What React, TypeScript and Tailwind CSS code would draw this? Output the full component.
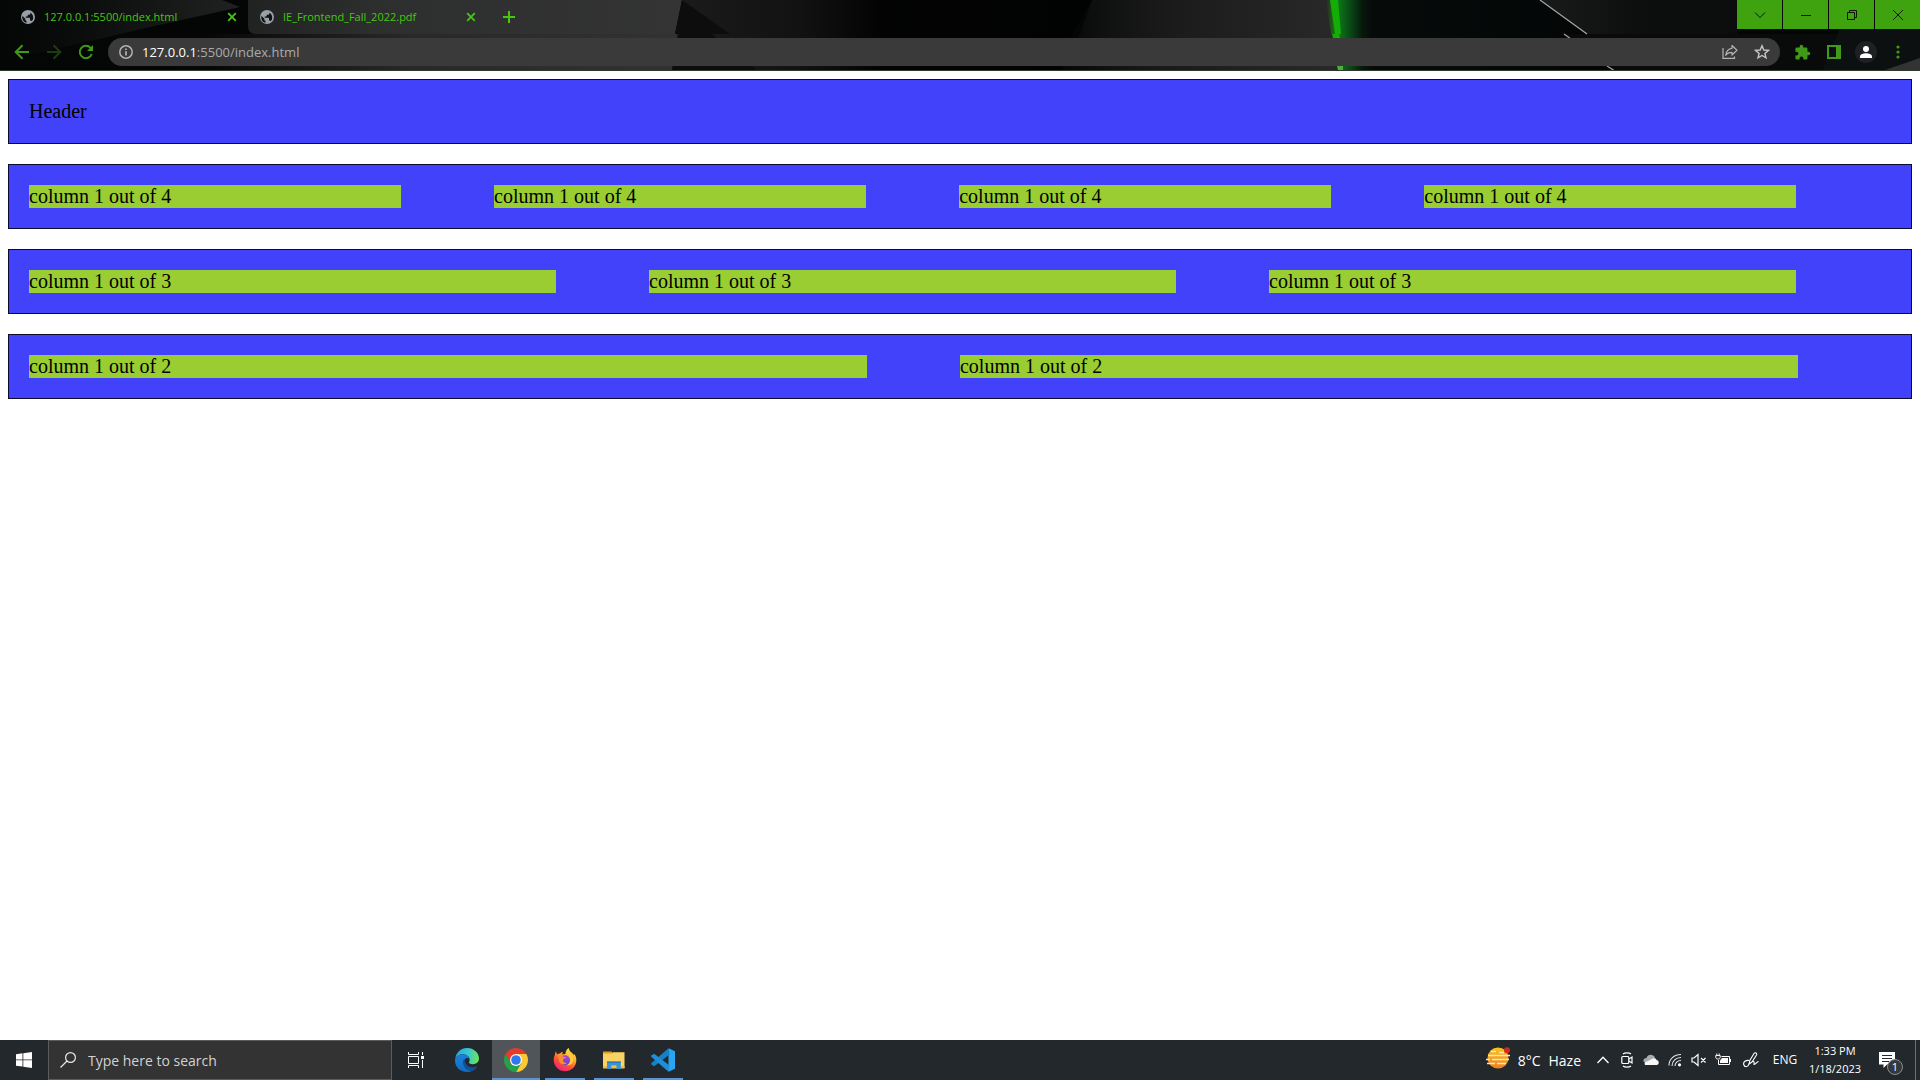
import type { ReactNode } from "react";

function Globe() {
  return (
    <svg viewBox="0 0 24 24" className="size-4 shrink-0">
      <circle cx="12" cy="12" r="10.5" fill="#9aa0a8" />
      <path
        d="M3.5 10 L8 14.5 V16 c0 1 1 1.600 1.800 1.600 V20.500 C5.600 20 2.600 16 3.500 10 Z M17.800 18.400 c-.3-.9-1-1.300-1.900-1.300 h-.9 v-2.800 c0-.6-.4-1-1-1 H8.600 v-2 h2 c.6 0 1-.4 1-1 V8.500 h2 c1 0 1.900-.9 1.900-1.900 v-.8 c3.500 1.600 5.200 6 4 9.500 Z"
        fill="#101212"
      />
    </svg>
  );
}

function CloseIcon() {
  return (
    <svg viewBox="0 0 10 10" className="size-[10px]" stroke="#4ac414" strokeWidth="1.8">
      <path d="M1.200 1.200 L8.800 8.800 M8.800 1.200 L1.200 8.800" />
    </svg>
  );
}

function Tab({ title, active }: { title: string; active?: boolean }) {
  return (
    <div
      className={
        active
          ? "flex h-[34px] w-[248px] items-center pl-5 pr-[11px]"
          : "flex h-[34px] w-[239px] items-center rounded-bl-lg pl-[11px] pr-[11px]"
      }
    >
      <Globe />
      <button type="button" className="ml-2 flex-1 text-left text-[11px] leading-4 text-[#45c812] whitespace-nowrap">
        {title}
      </button>
      <button type="button" aria-label={"Close " + title}>
        <CloseIcon />
      </button>
    </div>
  );
}

function ThemeArt() {
  return (
    <svg viewBox="0 0 1920 71" preserveAspectRatio="none" className="absolute inset-0 h-full w-full" aria-hidden="true">
      <defs>
        <linearGradient id="wedge" x1="0" x2="1">
          <stop offset="0" stopColor="#050606" />
          <stop offset="0.300" stopColor="#0a0b0b" />
          <stop offset="1" stopColor="#202222" />
        </linearGradient>
        <linearGradient id="panel" x1="0" x2="1">
          <stop offset="0" stopColor="#212322" />
          <stop offset="0.3" stopColor="#2d2e2e" />
          <stop offset="1" stopColor="#343434" />
        </linearGradient>
        <linearGradient id="toolbar" x1="0" x2="1">
          <stop offset="0" stopColor="#040505" />
          <stop offset="0.3" stopColor="#050606" />
          <stop offset="0.6" stopColor="#272828" />
          <stop offset="1" stopColor="#323232" />
        </linearGradient>
        <linearGradient id="fade" x1="0" x2="1">
          <stop offset="0" stopColor="#1b1b1b" />
          <stop offset="0.3" stopColor="#121212" />
          <stop offset="0.5" stopColor="#030303" />
          <stop offset="1" stopColor="#010302" />
        </linearGradient>
        <linearGradient id="slab" x1="0" x2="1">
          <stop offset="0" stopColor="#050706" />
          <stop offset="0.15" stopColor="#0f1110" />
          <stop offset="0.4" stopColor="#1b1b1b" />
          <stop offset="1" stopColor="#292929" />
        </linearGradient>
        <linearGradient id="glow" x1="0" x2="1">
          <stop offset="0" stopColor="#0c8a14" />
          <stop offset="0.4" stopColor="#0a4d16" />
          <stop offset="0.75" stopColor="#07180d" />
          <stop offset="1" stopColor="#060b0a" />
        </linearGradient>
        <linearGradient id="dark" x1="0" x2="1">
          <stop offset="0" stopColor="#060b0a" />
          <stop offset="1" stopColor="#040606" />
        </linearGradient>
        <linearGradient id="edgeGlow" x1="0" x2="1">
          <stop offset="0" stopColor="#14ad06" stopOpacity="0" />
          <stop offset="1" stopColor="#14ad06" stopOpacity="0.6" />
        </linearGradient>
        <linearGradient id="right" x1="0" x2="1">
          <stop offset="0" stopColor="#191b1a" />
          <stop offset="0.5" stopColor="#0c0f0e" />
          <stop offset="1" stopColor="#0b0d0d" />
        </linearGradient>
      </defs>
      <rect width="1920" height="71" fill="#040606" />
      <path d="M248 0 H682 L675 34 H256 Q248 34 248 26 Z" fill="url(#panel)" />
      <path d="M0 71 V34 H679 L672 71 H0 Z" fill="url(#toolbar)" />
      <path d="M0 0 H222 L240 7 L150 27 L60 48 L0 62 Z" fill="url(#wedge)" />
      <path d="M682 0 H1092 L1073 34 L1060 71 H672 Z" fill="url(#fade)" />
      <path d="M682 0 L730 34 H675 Z M679 34 H712 L757 70 H672 Z" fill="#0d0d0d" />
      <path d="M1092 0 H1335 L1342 71 H1060 L1080 34 Z" fill="url(#slab)" />
      <path d="M1334 0 H1372 L1372 71 H1340 Z" fill="url(#glow)" />
      <path d="M1372 0 H1600 V71 H1372 Z" fill="url(#dark)" />
      <path d="M1326 0 H1331 L1336 34 H1331 Z" fill="url(#edgeGlow)" />
      <path d="M1330 0 H1338 L1341 34 H1335 Z M1332 34 H1339 L1340 38 H1333 Z" fill="#14ad06" />
      <path d="M1337 66 H1343 V70 H1338 Z" fill="#4cae3d" />
      <path d="M1540 0 H1737 V34 H1587 Z" fill="url(#right)" />
      <path d="M1564 34 H1840 L1822 71 H1616 Z" fill="#080b0a" />
      <path d="M1840 28 H1920 V71 H1822 Z" fill="#0d1010" />
      <path d="M1540 0 L1587 34 M1564 34 L1571 39 M1607 66 L1615 71" stroke="#a6a6a6" strokeWidth="1.2" />
      <path d="M1885 70 L1920 58 V70 Z" fill="#333333" />
      <rect y="70" width="1920" height="1" fill="#2e3a29" />
    </svg>
  );
}

function WindowButton({ label, children }: { label: string; children: ReactNode }) {
  return (
    <button type="button" aria-label={label} className="flex h-[29px] w-[45px] items-center justify-center bg-[#3fa310]">
      <svg viewBox="0 0 12 12" className="size-3" fill="none" stroke="#0a1604" strokeWidth="1">
        {children}
      </svg>
    </button>
  );
}

function ToolButton({ label, children }: { label: string; children: ReactNode }) {
  return (
    <button type="button" aria-label={label} className="flex h-7 w-8 shrink-0 items-center justify-center">
      {children}
    </button>
  );
}

function BrowserChrome() {
  return (
    <header className="relative h-[71px] bg-black font-['Open_Sans','Noto_Sans',sans-serif]">
      <ThemeArt />
      <div className="relative flex h-[34px] items-start">
        <Tab title="127.0.0.1:5500/index.html" active />
        <Tab title="IE_Frontend_Fall_2022.pdf" />
        <button type="button" aria-label="New tab" className="ml-[10px] flex h-[34px] w-6 items-center justify-center">
          <svg viewBox="0 0 12 12" className="size-3" stroke="#45c812" strokeWidth="2">
            <path d="M6 0 V12 M0 6 H12" />
          </svg>
        </button>
        <div className="ml-auto flex gap-px">
          <WindowButton label="Search tabs">
            <path d="M1 3.500 L6 8.500 L11 3.500" />
          </WindowButton>
          <WindowButton label="Minimize">
            <path d="M1 6.500 H11" />
          </WindowButton>
          <WindowButton label="Restore">
            <path d="M1.500 3.500 H8.500 V10.500 H1.500 Z M3.500 3.500 V1.500 H10.500 V8.500 H8.500" />
          </WindowButton>
          <WindowButton label="Close">
            <path d="M1 1 L11 11 M11 1 L1 11" />
          </WindowButton>
        </div>
      </div>
      <div className="relative flex h-9 items-center pl-[6px] pr-[6px]">
        <ToolButton label="Back">
          <svg viewBox="0 0 16 16" className="size-4" fill="none" stroke="#3f9a17" strokeWidth="2">
            <path d="M15 8 H2 M8.500 1.200 L1.700 8 L8.500 14.800" />
          </svg>
        </ToolButton>
        <ToolButton label="Forward">
          <svg viewBox="0 0 16 16" className="size-4" fill="none" stroke="#1c3d10" strokeWidth="2">
            <path d="M1 8 H14 M7.500 1.200 L14.300 8 L7.500 14.800" />
          </svg>
        </ToolButton>
        <ToolButton label="Reload">
          <svg viewBox="0 0 16 16" className="size-4" fill="none" stroke="#3f9a17" strokeWidth="2">
            <path d="M13.800 10 A6.200 6.200 0 1 1 12.600 3.800" />
            <path d="M15 1 V7 H9 Z" fill="#3f9a17" stroke="none" />
          </svg>
        </ToolButton>
        <div className="ml-[6px] flex h-7 flex-1 items-center rounded-full bg-[#3a3a3a] pl-[11px] pr-0.5">
          <svg viewBox="0 0 14 14" className="size-[14px] shrink-0" fill="none" stroke="#b0b3b6" strokeWidth="1.500">
            <circle cx="7" cy="7" r="6.200" />
            <path d="M7 6.200 V10.500 M7 3.500 V5" strokeWidth="1.700" />
          </svg>
          <label htmlFor="address" className="ml-[9px] text-[13px] leading-5 text-white">
            127.0.0.1
          </label>
          <input
            id="address"
            defaultValue=":5500/index.html"
            className="min-w-0 flex-1 bg-transparent text-[13px] leading-5 text-[#a9abad] outline-none"
          />
          <ToolButton label="Share">
            <svg viewBox="0 0 16 16" className="size-4" fill="none" stroke="#b4b4b4" strokeWidth="1.200">
              <path d="M1 4 V14.400 H12.500 V12.500" />
              <path d="M10 1.500 L15 6.300 L10 11 V8.300 C7 8.300 5 9.300 3.700 11.300 C4.200 7.300 6.500 4.700 10 4.300 Z" strokeLinejoin="round" />
            </svg>
          </ToolButton>
          <ToolButton label="Bookmark">
            <svg viewBox="0 0 16 16" className="size-4" fill="none" stroke="#c4c6c8" strokeWidth="1.400">
              <path d="M8 1.800 L9.800 6 L14.400 6.400 L10.900 9.400 L12 13.900 L8 11.500 L4 13.900 L5.100 9.400 L1.600 6.400 L6.200 6 Z" />
            </svg>
          </ToolButton>
        </div>
        <div className="ml-[6px] flex">
          <ToolButton label="Extensions">
            <svg viewBox="0 0 24 24" className="size-[17px]" fill="#3f9a17">
              <path d="M20.500 11 H19 V7 a2 2 0 0 0-2-2 h-4 V3.500 a2.500 2.500 0 0 0-5 0 V5 H4 a2 2 0 0 0-2 2 v3.800 h1.500 a2.700 2.700 0 0 1 0 5.400 H2 V20 a2 2 0 0 0 2 2 h3.800 v-1.500 a2.700 2.700 0 0 1 5.400 0 V22 H17 a2 2 0 0 0 2-2 v-4 h1.500 a2.500 2.500 0 0 0 0-5 Z" />
            </svg>
          </ToolButton>
          <ToolButton label="Side panel">
            <svg viewBox="0 0 14 14" className="size-[14px]">
              <path d="M0 0 H14 V14 H0 Z M2 2 V12 H9 V2 Z" fill="#3f9a17" fillRule="evenodd" />
            </svg>
          </ToolButton>
          <ToolButton label="Profile">
            <svg viewBox="0 0 22 22" className="size-[22px]">
              <circle cx="11" cy="11" r="11" fill="#1f2024" />
              <circle cx="11" cy="8" r="3" fill="#ffffff" />
              <path d="M5 17 V15.500 C5 13.300 8.500 12.300 11 12.300 C13.500 12.300 17 13.300 17 15.500 V17 Z" fill="#ffffff" />
            </svg>
          </ToolButton>
          <ToolButton label="Menu">
            <svg viewBox="0 0 4 14" className="h-[14px] w-1" fill="#3f9a17">
              <circle cx="2" cy="2" r="1.600" />
              <circle cx="2" cy="7" r="1.600" />
              <circle cx="2" cy="12" r="1.600" />
            </svg>
          </ToolButton>
        </div>
      </div>
    </header>
  );
}

function Row({ children }: { children: ReactNode }) {
  return <section className="mb-5 flex border border-[#0b0b32] bg-[#4242fa] p-5">{children}</section>;
}

function Page() {
  return (
    <main className="flex-1 bg-white p-2 font-['Liberation_Serif',serif] text-[20px] leading-[23px] text-black">
      <Row>Header</Row>
      <Row>
        {[1, 2, 3, 4].map((n) => (
          <div key={n} className="mr-[5%] w-[19.98%] bg-[#9acd32]">
            column 1 out of 4
          </div>
        ))}
      </Row>
      <Row>
        {[1, 2, 3].map((n) => (
          <div key={n} className="mr-[5%] w-[28.3%] bg-[#9acd32]">
            column 1 out of 3
          </div>
        ))}
      </Row>
      <Row>
        {[1, 2].map((n) => (
          <div key={n} className="mr-[5%] w-[45%] bg-[#9acd32]">
            column 1 out of 2
          </div>
        ))}
      </Row>
    </main>
  );
}

function AppButton({ label, active, running, children }: { label: string; active?: boolean; running?: boolean; children: ReactNode }) {
  return (
    <button
      type="button"
      aria-label={label}
      className={active ? "flex h-10 w-12 flex-col items-center bg-[#515559]" : "flex h-10 w-12 flex-col items-center"}
    >
      <span className="flex h-[38px] items-center pt-0.5">{children}</span>
      <span className={active ? "h-0.5 w-12 bg-[#5a94d6]" : running ? "h-0.5 w-10 bg-[#5a94d6]" : "h-0.5 w-10"} />
    </button>
  );
}

function EdgeIcon() {
  return (
    <svg viewBox="0 0 24 24" className="size-6">
      <defs>
        <linearGradient id="edgeTop" x1="0" y1="0.400" x2="1" y2="0.500">
          <stop offset="0" stopColor="#2ba6e0" />
          <stop offset="0.5" stopColor="#35c6d2" />
          <stop offset="1" stopColor="#6ee35a" />
        </linearGradient>
        <linearGradient id="edgeBody" x1="0" y1="0" x2="0.400" y2="1">
          <stop offset="0" stopColor="#1b84d8" />
          <stop offset="1" stopColor="#1169c2" />
        </linearGradient>
      </defs>
      <path d="M0.200 11 C1 4.500 6 0 12 0 C19 0 24 5 24 10.600 C24 14.200 21.200 16.200 18 16.200 C15 16.200 13.600 15.200 13.900 14.300 C15.600 12.500 14.800 7.500 9.500 6.500 C5.500 5.800 1.500 7.500 0.200 11 Z" fill="url(#edgeTop)" />
      <path d="M0 12.500 C0 9 4 6 8.500 6.200 C12.500 6.500 15 9 14.900 11.500 C14 9.800 11.500 9.300 10 11 C7.500 14 9.500 19.500 14.500 20.800 C17.500 21.500 20 20.500 22.400 18.200 C20 22 16.500 24 12 24 C5 24 0 19 0 12.500 Z" fill="url(#edgeBody)" />
      <path d="M8.300 12 C7 16.500 10 22.500 16.500 23 C19 22 21 20.500 22.400 18.300 C22 17.800 20.500 19.200 17.800 19.200 C13 19.200 9.300 15.800 10 11.200 Z" fill="#114f96" />
    </svg>
  );
}

function ChromeIcon() {
  return (
    <svg viewBox="0 0 24 24" className="size-6">
      <path d="M12 6 H22.390 A12 12 0 0 1 12 24 L17.200 15 Z" fill="#fcc934" />
      <path d="M6.800 15 L1.610 6 A12 12 0 0 0 12 24 L17.200 15 Z" fill="#26a148" />
      <path d="M12 6 H22.390 A12 12 0 0 0 1.610 6 L6.800 15 Z" fill="#e33b2e" />
      <circle cx="12" cy="12" r="6" fill="#ffffff" />
      <circle cx="12" cy="12" r="4.800" fill="#2f78ee" />
    </svg>
  );
}

function FirefoxIcon() {
  return (
    <svg viewBox="0 0 24 24" className="size-6">
      <defs>
        <linearGradient id="fox" x1="0.800" y1="0" x2="0.250" y2="1">
          <stop offset="0" stopColor="#fff04a" />
          <stop offset="0.350" stopColor="#ffad2e" />
          <stop offset="0.650" stopColor="#ff5136" />
          <stop offset="1" stopColor="#ee1b80" />
        </linearGradient>
        <linearGradient id="fire" x1="0.500" y1="0" x2="0.500" y2="1">
          <stop offset="0" stopColor="#b340e8" />
          <stop offset="1" stopColor="#4d49d0" />
        </linearGradient>
      </defs>
      <path d="M3.200 3.300 C3.100 4.800 3.600 5.800 4.200 6.200 C5 5.500 6 5.300 7 5.500 C8 4.300 9 3.900 10 3.900 C9.300 4.600 9.100 5.400 9.200 6.200 L12.500 6 C12.500 3.500 13.500 1.200 15.800 0 C15.800 2.500 18 4 19.500 5.500 C20.500 6.200 20.800 7 20.900 7.500 C21.300 7 21.200 6.300 21 5.800 C23 8 23.500 10.500 23.300 13 C22.700 19 18 23.300 12.200 23.300 C6 23.300 0.900 18.500 0.700 12.300 C0.600 10.300 1.100 8.300 1.900 7 C1.900 5.500 2.400 4.200 3.200 3.300 Z" fill="url(#fox)" />
      <circle cx="12" cy="12.200" r="5" fill="url(#fire)" />
      <path d="M4.500 8.500 C6.500 7 9 7.500 10 8.800 L13 9 C13 10.500 10.800 10.300 10.200 11.500 C9.500 14 11.500 15.200 14 14.400 C13 16.600 9 17.300 7 14.800 C5.500 13 6.500 11 4.500 8.500 Z" fill="#ff8a2a" />
      <path d="M12.700 5.800 C15.500 6.800 17.700 9 17.400 12.500 C17 15 15.500 16.500 14 17 C18 18 21 14.500 20 10 C19 7.500 16.500 6 16 3 L13 4 Z" fill="#ffcb3a" />
    </svg>
  );
}

function ExplorerIcon() {
  return (
    <svg viewBox="0 0 24 20" className="h-5 w-6">
      <path d="M1 1.500 H9.500 L11 3.500 H1 Z" fill="#e5a00d" />
      <path d="M1 3.300 H10 L11 2.300 H22.500 V18 H1 Z" fill="#fbd365" />
      <path d="M1 16 H22.500 V18.500 H1 Z" fill="#eebd4e" />
      <path d="M5 11.500 H18.800 V19 H14.500 V15.500 H9.300 V19 H5 Z" fill="#3b93d6" />
      <path d="M5 11.500 H18.800 V13 H5 Z" fill="#2b7cc2" />
    </svg>
  );
}

function CodeIcon() {
  return (
    <svg viewBox="0 0 24 24" className="size-6">
      <path d="M17.500 0.200 L24 3.200 V20.800 L17.500 23.800 Z" fill="#2aa5f2" />
      <path d="M17.500 0.200 L18.600 6.500 L3.200 18.200 L0.200 16.500 V15.300 Z" fill="#1580c8" />
      <path d="M17.500 23.800 L18.600 17.500 L3.200 5.800 L0.200 7.500 V8.700 Z" fill="#1c8fdc" />
    </svg>
  );
}

function TrayButton({ label, children }: { label: string; children: ReactNode }) {
  return (
    <button type="button" aria-label={label} className="flex h-10 w-6 items-center justify-center">
      {children}
    </button>
  );
}

function Taskbar() {
  return (
    <footer className="flex h-10 items-center bg-[#23282d] font-['Open_Sans','Noto_Sans',sans-serif] text-white">
      <button type="button" aria-label="Start" className="flex h-10 w-12 items-center justify-center">
        <svg viewBox="0 0 16 16" className="size-4" fill="#ffffff">
          <path d="M0 2.200 L6.500 1.300 V7.500 H0 Z M7.300 1.200 L16 0 V7.500 H7.300 Z M0 8.300 H6.500 V14.600 L0 13.700 Z M7.300 8.300 H16 V16 L7.300 14.700 Z" />
        </svg>
      </button>
      <label className="flex h-10 w-[344px] items-center border border-[#5c5c5c] bg-[#333333] pl-[11px]">
        <svg viewBox="0 0 16 16" className="size-4 shrink-0" fill="none" stroke="#e8e8e8" strokeWidth="1.200">
          <circle cx="10.500" cy="5.500" r="4.900" />
          <path d="M7 9 L0.500 15.500" />
        </svg>
        <input
          type="text"
          aria-label="Search"
          placeholder="Type here to search"
          className="ml-3 min-w-0 flex-1 bg-transparent pt-0.5 text-[14px] leading-5 outline-none placeholder:text-[#d2d2d2]"
        />
      </label>
      <div className="flex gap-px">
        <button type="button" aria-label="Task view" className="mr-0.5 flex h-10 w-12 items-center justify-center">
          <svg viewBox="0 0 16 16" className="size-4" fill="none" stroke="#ffffff" strokeWidth="1">
            <path d="M0.500 0 V2.500 H10.500 V0 M0.500 4.500 H10.500 V11.500 H0.500 Z M0.500 16 V13.500 H10.500 V16 M14.500 0 V3 M14.500 8 V16" />
            <path d="M13 4 H16 V7 H13 Z" fill="#ffffff" stroke="none" />
          </svg>
        </button>
        <AppButton label="Edge"><EdgeIcon /></AppButton>
        <AppButton label="Chrome" active><ChromeIcon /></AppButton>
        <AppButton label="Firefox" running><FirefoxIcon /></AppButton>
        <AppButton label="File Explorer" running><ExplorerIcon /></AppButton>
        <AppButton label="Visual Studio Code" running><CodeIcon /></AppButton>
      </div>
      <div className="ml-auto flex items-center">
        <button type="button" className="mr-[10px] flex h-10 items-center text-[14px] leading-5 whitespace-nowrap">
          <svg viewBox="0 0 24 22" className="mr-2 mb-1 h-[22px] w-6">
            <defs>
              <linearGradient id="sun" x1="0" y1="0" x2="0" y2="1">
                <stop offset="0" stopColor="#fbc21b" />
                <stop offset="1" stopColor="#ef7f22" />
              </linearGradient>
            </defs>
            <circle cx="12" cy="11" r="10.500" fill="url(#sun)" />
            <path d="M5 4.500 H10 M13 5.500 H18 M2 8.500 H24 M6 12.500 H23 M0 12.500 H4 M1 16.500 H9 M11 16.500 H20" stroke="#fbe7b8" strokeWidth="1.600" />
            <circle cx="21" cy="3.200" r="3" fill="#d32a1e" />
          </svg>
          <span className="pt-0.5">8°C</span>
          <span className="ml-2 pt-0.5">Haze</span>
        </button>
        <TrayButton label="Show hidden icons">
          <svg viewBox="0 0 12 8" className="h-2 w-3" fill="none" stroke="#ffffff" strokeWidth="1.300">
            <path d="M0.500 7 L6 1.200 L11.500 7" />
          </svg>
        </TrayButton>
        <TrayButton label="Meet now">
          <svg viewBox="0 0 12 16" className="h-4 w-3" fill="none" stroke="#ffffff" strokeWidth="1.200">
            <rect x="0.800" y="4.500" width="7" height="7" rx="1" />
            <path d="M7.800 7 L11 5 V11 L7.800 9 M2 2 C4 0.500 8 0.500 10 2 M2 14 C4 15.500 8 15.500 10 14" />
          </svg>
        </TrayButton>
        <TrayButton label="OneDrive">
          <svg viewBox="0 0 16 12" className="h-3 w-4">
            <path d="M3 9 C-1 8 0 4 3.500 4 C4.500 0 10 -0.500 12 3.500 L8 8 Z" fill="#a9acae" />
            <path d="M3 11 C1 11 1 8 4 7.500 L9 5 C11 3.500 13 4 13.500 6 C16.500 6.500 16.500 11 13.500 11 Z" fill="#f7f7f7" />
          </svg>
        </TrayButton>
        <TrayButton label="Network">
          <svg viewBox="0 0 14 14" className="size-[14px]" fill="none" stroke="#e6e6e6" strokeWidth="1.100">
            <path d="M1 12.500 C1 6 6 1.500 13 1.500 M4 13 C4 8 8 4.500 13 4.500 M7 13 C7 10 9.500 7.500 13 7.500" />
            <circle cx="11.500" cy="11.800" r="1.600" fill="#ffffff" stroke="none" />
          </svg>
        </TrayButton>
        <TrayButton label="Muted">
          <svg viewBox="0 0 16 14" className="h-[14px] w-4" fill="none" stroke="#ffffff" strokeWidth="1.200">
            <path d="M1 5 H3 L7 1.500 V12.500 L3 9 H1 Z M10 5 L14.500 9.500 M14.500 5 L10 9.500" />
          </svg>
        </TrayButton>
        <TrayButton label="Battery">
          <svg viewBox="0 0 16 14" className="h-[14px] w-4" fill="none" stroke="#ffffff" strokeWidth="1">
            <path d="M6.500 3.500 H14.500 V11.500 H3.500 V7 M15.500 6 V9 M0.800 2.500 H5.200 V4.500 C5.200 6.500 0.800 6.500 0.800 4.500 Z M1.800 0.500 V2.500 M4.200 0.500 V2.500" />
            <path d="M7 5 H13 V10 H5 V7.500 Z" fill="#ffffff" stroke="none" />
          </svg>
        </TrayButton>
        <div className="mx-1">
          <TrayButton label="Pen workspace">
            <svg viewBox="0 0 16 16" className="size-4" fill="none" stroke="#ffffff" strokeWidth="1.100">
              <path d="M6 12 L6.800 8.500 L11 1.500 C12 0 14.500 1.300 13.500 3 L9 10 Z M6 8.500 C3 7.800 0 10 0.700 12.500 C1.500 15.500 5 15.500 6 12 M9.500 9.500 C10.500 9 11.500 9.500 11 12.500 C12.500 13 13.500 10 15.500 9.500" />
            </svg>
          </TrayButton>
        </div>
        <button type="button" className="h-10 w-9 text-center text-[12px] leading-[18px]">ENG</button>
        <button type="button" className="flex h-10 w-16 flex-col items-center justify-center text-[11px] leading-[18px] whitespace-nowrap">
          <span>1:33 PM</span>
          <span>1/18/2023</span>
        </button>
        <button type="button" aria-label="Notifications" className="relative flex h-10 w-12 items-center pl-3">
          <svg viewBox="0 0 16 16" className="size-4">
            <path d="M0 0 H16 V12.500 H8 L4.500 16 V12.500 H0 Z" fill="#ffffff" />
            <path d="M3 3.500 H13 M3 6.500 H13 M3 9.500 H10" stroke="#23282d" />
          </svg>
          <span className="absolute left-5 top-[19px] flex size-4 items-center justify-center rounded-full border border-[#8b8f92] bg-[#33383c] text-[11px] leading-3">
            1
          </span>
        </button>
        <span className="mr-1 h-10 w-px bg-[#6d7174]" />
      </div>
    </footer>
  );
}

export default function App() {
  return (
    <div className="flex min-h-screen flex-col bg-white">
      <BrowserChrome />
      <Page />
      <Taskbar />
    </div>
  );
}
